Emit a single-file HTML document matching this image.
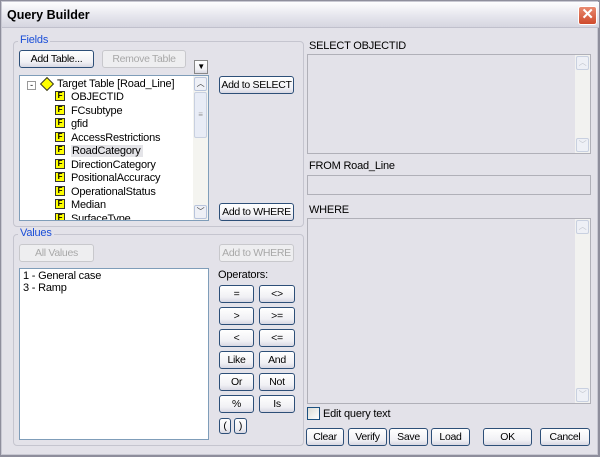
<!DOCTYPE html>
<html><head><style>
*{box-sizing:border-box;margin:0;padding:0}
body{width:600px;height:457px;background:#8e8e9c;font-family:"Liberation Sans",sans-serif;font-size:11px;letter-spacing:-0.2px;color:#000;position:relative;overflow:hidden}
.win{position:absolute;left:1px;top:1px;width:597px;height:454px;background:#e3e2e9;border:1px solid #c8c8d2}
.a{position:absolute;white-space:nowrap}
.title{position:absolute;left:0;top:0;width:597px;height:26px;background:linear-gradient(#fdfdfe,#e4e4ec 60%,#d6d6e0);border-bottom:1px solid #c0c0cc}
.title b{position:absolute;left:5px;top:6px;font-size:12.5px;letter-spacing:0}
.close{position:absolute;left:576px;top:4px;width:19px;height:19px;border-radius:3px;background:linear-gradient(#e88a70,#cf4a2c);border:1px solid #fff;color:#fff;text-align:center;font-size:15px;line-height:16px;font-weight:bold}
.grp{position:absolute;border:1px solid #c5c5cf;border-radius:4px}
.lbl{position:absolute;background:#e3e2e9;color:#1a4ed8;padding:0 2px}
.btn{position:absolute;height:18px;border:1px solid #2d4f78;border-radius:3px;background:linear-gradient(#fff,#f0f0f4 70%,#d8d8e2);text-align:center;line-height:16px;font-size:10.5px;white-space:nowrap;overflow:hidden;letter-spacing:-0.3px}
.dis{border-color:#c8c8cc;color:#a8a8a8;background:#eeeef0}
.box{position:absolute;background:#fff;border:1px solid #7f9db9}
.gbox{position:absolute;background:#e3e2e9;border:1px solid #b0b0b8}
.sb{position:absolute;right:0;top:0;bottom:0;width:15px;background:#f4f4f2}
.sbb{position:absolute;left:1px;width:13px;height:14px;border:1px solid #c8d0e0;border-radius:2px;background:#eef0f6;font-size:8px;text-align:center;color:#c0c4cc;line-height:12px}
.row{position:absolute;left:35px;height:13px;line-height:13px;white-space:nowrap}
.f{display:inline-block;width:10px;height:10px;background:#ff0;border:1px solid #333;font-size:8px;font-weight:bold;line-height:8px;text-align:center;vertical-align:middle;margin-right:6px;margin-top:-2px}
</style></head><body>
<div class="win">
<div class="title"><b>Query Builder</b><div class="close">✕</div></div>

<div class="grp" style="left:11px;top:39px;width:291px;height:186px"></div>
<div class="lbl" style="left:16px;top:32px">Fields</div>
<div class="btn" style="left:17px;top:48px;width:75px">Add Table...</div>
<div class="btn dis" style="left:100px;top:48px;width:84px">Remove Table</div>
<div class="btn" style="left:192px;top:58px;width:14px;height:14px;border-radius:0;border-color:#888;font-size:8px;line-height:12px">▼</div>
<div class="box" style="left:17px;top:73px;width:190px;height:146px;overflow:hidden">
 <div class="sb" style="background:#f4f4f0"><div class="sbb" style="top:1px;color:#333;border-color:#b8c4dc">︿</div><div class="sbb" style="top:16px;height:46px;background:#e8ecf6;color:#999;line-height:44px">≡</div><div class="sbb" style="bottom:1px;color:#333;border-color:#b8c4dc">﹀</div></div>
 <div class="a" style="left:7px;top:5px;width:9px;height:9px;border:1px solid #999;background:#fff;font-size:9px;line-height:6px;text-align:center">-</div>
 <div class="a" style="left:22px;top:3px;width:10px;height:10px;background:#ff0;border:1px solid #333;transform:rotate(45deg)"></div>
 <div class="a" style="left:37px;top:2px;line-height:13px">Target Table [Road_Line]</div>
 <div class="row" style="top:15px"><span class="f">F</span>OBJECTID</div>
 <div class="row" style="top:29px"><span class="f">F</span>FCsubtype</div>
 <div class="row" style="top:42px"><span class="f">F</span>gfid</div>
 <div class="row" style="top:56px"><span class="f">F</span>AccessRestrictions</div>
 <div class="row" style="top:69px"><span class="f">F</span><span style="background:#e4e4e8;padding:0 2px 0 1px">RoadCategory</span></div>
 <div class="row" style="top:83px"><span class="f">F</span>DirectionCategory</div>
 <div class="row" style="top:96px"><span class="f">F</span>PositionalAccuracy</div>
 <div class="row" style="top:110px"><span class="f">F</span>OperationalStatus</div>
 <div class="row" style="top:123px"><span class="f">F</span>Median</div>
 <div class="row" style="top:137px"><span class="f">F</span>SurfaceType</div>
</div>
<div class="btn" style="left:217px;top:74px;width:75px">Add to SELECT</div>
<div class="btn" style="left:217px;top:201px;width:75px">Add to WHERE</div>

<div class="grp" style="left:11px;top:232px;width:291px;height:212px"></div>
<div class="lbl" style="left:16px;top:225px">Values</div>
<div class="btn dis" style="left:17px;top:242px;width:75px">All Values</div>
<div class="btn dis" style="left:217px;top:242px;width:75px">Add to WHERE</div>
<div class="box" style="left:17px;top:266px;width:190px;height:172px;padding:1px 3px;line-height:12px">1 - General case<br>3 - Ramp</div>
<div class="a" style="left:216px;top:267px">Operators:</div>
<div class="btn" style="left:217px;top:283px;width:35px">=</div><div class="btn" style="left:257px;top:283px;width:36px">&lt;&gt;</div>
<div class="btn" style="left:217px;top:305px;width:35px">&gt;</div><div class="btn" style="left:257px;top:305px;width:36px">&gt;=</div>
<div class="btn" style="left:217px;top:327px;width:35px">&lt;</div><div class="btn" style="left:257px;top:327px;width:36px">&lt;=</div>
<div class="btn" style="left:217px;top:349px;width:35px">Like</div><div class="btn" style="left:257px;top:349px;width:36px">And</div>
<div class="btn" style="left:217px;top:371px;width:35px">Or</div><div class="btn" style="left:257px;top:371px;width:36px">Not</div>
<div class="btn" style="left:217px;top:393px;width:35px">%</div><div class="btn" style="left:257px;top:393px;width:36px">Is</div>
<div class="btn" style="left:217px;top:416px;width:12px;height:16px;line-height:14px">(</div><div class="btn" style="left:232px;top:416px;width:13px;height:16px;line-height:14px">)</div>

<div class="a" style="left:307px;top:38px">SELECT OBJECTID</div>
<div class="gbox" style="left:305px;top:52px;width:284px;height:100px"><div class="sb" style="background:#f2f2f0"><div class="sbb" style="top:1px">︿</div><div class="sbb" style="bottom:1px">﹀</div></div></div>
<div class="a" style="left:307px;top:158px">FROM Road_Line</div>
<div class="gbox" style="left:305px;top:173px;width:284px;height:20px"></div>
<div class="a" style="left:307px;top:202px">WHERE</div>
<div class="gbox" style="left:305px;top:216px;width:284px;height:186px"><div class="sb" style="background:#f2f2f0"><div class="sbb" style="top:1px">︿</div><div class="sbb" style="bottom:1px">﹀</div></div></div>
<div class="a" style="left:305px;top:405px;width:13px;height:13px;border:1px solid #1c5180;background:linear-gradient(135deg,#dcdcd6,#fff)"></div>
<div class="a" style="left:321px;top:406px">Edit query text</div>
<div class="btn" style="left:304px;top:426px;width:38px">Clear</div>
<div class="btn" style="left:346px;top:426px;width:39px">Verify</div>
<div class="btn" style="left:387px;top:426px;width:39px">Save</div>
<div class="btn" style="left:429px;top:426px;width:39px">Load</div>
<div class="btn" style="left:481px;top:426px;width:49px">OK</div>
<div class="btn" style="left:538px;top:426px;width:50px">Cancel</div>
</div>
</body></html>
